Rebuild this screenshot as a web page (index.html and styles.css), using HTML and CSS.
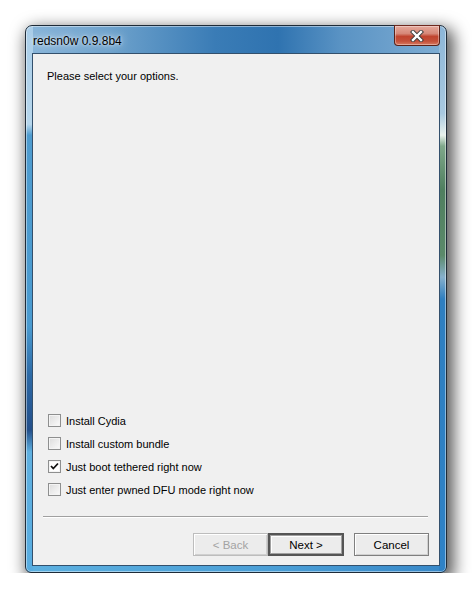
FILE: index.html
```html
<!DOCTYPE html>
<html>
<head>
<meta charset="utf-8">
<link rel="stylesheet" href="styles.css">
</head>
<body>
<div class="window">
  <div class="titlebar">
    <span class="title">redsn0w 0.9.8b4</span>
    <div class="close">
      <svg width="14" height="12" viewBox="0 0 14 12">
        <path d="M3 2 L11 10 M11 2 L3 10" stroke="#3b3b3b" stroke-width="4.2" stroke-linecap="square" fill="none"/>
        <path d="M3 2 L11 10 M11 2 L3 10" stroke="#ffffff" stroke-width="2.4" stroke-linecap="square" fill="none"/>
      </svg>
    </div>
  </div>
  <div class="client">
    <p class="intro">Please select your options.</p>
    <div class="options">
      <label class="opt"><span class="box"></span>Install Cydia</label>
      <label class="opt"><span class="box"></span>Install custom bundle</label>
      <label class="opt"><span class="box checked"><svg width="11" height="11" viewBox="0 0 11 11"><path d="M2 5 L4.3 7.5 L9 2.5" stroke="#111" stroke-width="1.8" fill="none"/></svg></span>Just boot tethered right now</label>
      <label class="opt"><span class="box"></span>Just enter pwned DFU mode right now</label>
    </div>
    <div class="sep"></div>
    <div class="buttons">
      <div class="btn disabled">&lt; Back</div>
      <div class="btn default">Next &gt;</div>
      <div class="btn cancel">Cancel</div>
    </div>
  </div>
</div>
</body>
</html>
```
FILE: styles.css
```css
html, body {
  margin: 0;
  padding: 0;
  background: #ffffff;
}
body {
  padding: 25px 0 0 25px;
  font-family: "Liberation Sans", "DejaVu Sans", sans-serif;
  font-size: 11px;
  color: #000;
}
.window {
  width: 422px;
  height: 548px;
  box-sizing: border-box;
  border: 1px solid #1e2b38;
  border-radius: 7px 7px 6px 6px;
  padding: 0 6px 6px 6px;
  display: flex;
  flex-direction: column;
  box-shadow: 4px 6px 16px 3px rgba(0,0,0,0.65), inset 0 0 0 1px rgba(255,255,255,0.45);
  background:
    linear-gradient(to bottom, #a9cde8 0%, #b6d6ec 18%, #4f9ccf 20%, #4a9bd0 55%, #2d6aa6 64%, #234f8a 74%, #5fb0e0 78%, #58ace0 100%) left top / 7px 100% no-repeat,
    linear-gradient(to bottom, #8cb6d8 0%, #a8c9e0 16%, #e8f2ec 20%, #7fa88a 22%, #4f7f5f 30%, #5b8a6a 42%, #86b0cc 46%, #2f7fc0 50%, #2f82c6 100%) right top / 7px 100% no-repeat,
    linear-gradient(to right, #8ab6da 0%, #6ea2cc 20%, #3a7cb6 45%, #2f73b0 60%, #5a93c4 75%, #80aed4 100%) left top / 100% 28px no-repeat,
    linear-gradient(to right, #5cb0e0, #4a9ed6 60%, #3888c8) ;
}
.titlebar {
  height: 27px;
  display: flex;
  align-items: flex-start;
}
.title {
  margin-left: 1px;
  margin-top: 8px;
  font-size: 12px;
  color: #000;
  text-shadow: 0 0 8px rgba(255,255,255,0.9), 0 0 3px rgba(255,255,255,0.8);
}
.close {
  margin-left: auto;
  margin-right: 0px;
  margin-top: -1px;
  width: 44px;
  height: 19px;
  border: 1px solid #5a2118;
  border-top-color: #6e2a20;
  border-radius: 0 0 4px 4px;
  background: linear-gradient(to bottom, #e6a99c 0%, #d68878 40%, #c0442f 55%, #c4503a 80%, #d87a62 100%);
  box-shadow: inset 0 0 0 1px rgba(255,255,255,0.35);
  display: flex;
  align-items: center;
  justify-content: center;
}
.client {
  flex: 1;
  border: 1px solid #33506c;
  background: #f0f0f0;
  display: flex;
  flex-direction: column;
  padding: 15px 10px 9px 10px;
}
.intro {
  margin: 0 0 0 4px;
  line-height: 15px;
}
.options {
  margin-top: auto;
  display: flex;
  flex-direction: column;
}
.opt {
  height: 23px;
  display: flex;
  align-items: center;
  padding-left: 5px;
}
.box {
  width: 11px;
  height: 11px;
  border: 1px solid #8e8f8f;
  background: linear-gradient(135deg, #dcdcdc, #fbfbfb);
  box-shadow: inset 0 0 0 1px #f4f4f4;
  margin-right: 5px;
  margin-top: -1px;
  display: flex;
  align-items: center;
  justify-content: center;
  flex: none;
}
.box.checked {
  background: #ffffff;
}
.sep {
  margin-top: 15px;
  height: 1px;
  background: #a0a0a0;
  border-bottom: 1px solid #ffffff;
  margin-right: 1px;
}
.buttons {
  margin-top: 15px;
  display: flex;
  justify-content: flex-end;
}
.btn {
  width: 73px;
  height: 21px;
  border: 1px solid #7f7f7f;
  background: #ececec;
  box-shadow: inset 1px 1px 0 #ffffff, inset -1px -1px 0 #d0d0d0;
  display: flex;
  align-items: center;
  justify-content: center;
  font-size: 11.5px;
}
.btn.disabled {
  border-color: #bdbdbd;
  color: #a3a3a3;
}
.btn.default {
  border: 2px solid #555555;
  width: 72px;
  height: 19px;
  box-shadow: inset 0 0 0 1px #a0a0a0, inset 2px 2px 0 #ffffff;
}
.btn.cancel {
  margin-left: 10px;
}
```
